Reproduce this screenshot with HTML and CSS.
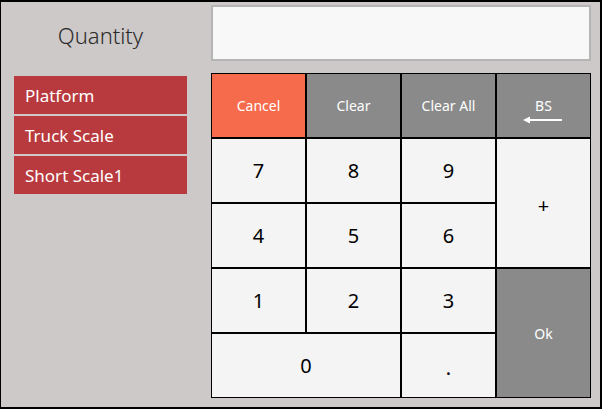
FILE: index.html
```html
<!DOCTYPE html>
<html>
<head>
<meta charset="utf-8">
<link rel="stylesheet" href="styles.css">
</head>
<body>
<div class="app">
  <div class="label">Quantity</div>
  <div class="input"></div>
  <div class="list">
    <div class="item">Platform</div>
    <div class="item">Truck Scale</div>
    <div class="item">Short Scale1</div>
  </div>
  <div class="pad">
    <div class="key cancel">Cancel</div>
    <div class="key grey">Clear</div>
    <div class="key grey">Clear All</div>
    <div class="key grey bs"><span>BS</span><svg width="40" height="8" viewBox="0 0 40 8"><rect x="4" y="3" width="35" height="2" fill="#fff"/><polygon points="0,4 7,0.5 7,7.5" fill="#fff"/></svg></div>
    <div class="key num">7</div>
    <div class="key num">8</div>
    <div class="key num">9</div>
    <div class="key num plus">+</div>
    <div class="key num">4</div>
    <div class="key num">5</div>
    <div class="key num">6</div>
    <div class="key num">1</div>
    <div class="key num">2</div>
    <div class="key num">3</div>
    <div class="key grey ok">Ok</div>
    <div class="key num zero">0</div>
    <div class="key num dot">.</div>
  </div>
</div>
</body>
</html>
```
FILE: styles.css
```css
html, body {
  margin: 0;
  padding: 0;
}
body {
  font-family: "Noto Sans", "Open Sans", sans-serif;
}
.app {
  width: 602px;
  height: 409px;
  box-sizing: border-box;
  border: 2px solid #000;
  border-left-width: 1px;
  background: #cdc9c8;
  padding: 4px 0 0 13px;
  display: grid;
  grid-template-columns: 173px 380px;
  grid-template-rows: 55px 325px;
  column-gap: 24px;
  row-gap: 12px;
}
.label {
  display: flex;
  align-items: center;
  justify-content: center;
  font-size: 22px;
  font-weight: 300;
  color: #2b2b2b;
  padding-top: 2px;
}
.input {
  box-sizing: border-box;
  background: #f8f8f8;
  border: 2px solid #b5b5b5;
  margin-top: -1px;
}
.list {
  display: flex;
  flex-direction: column;
  gap: 2px;
  padding-top: 3px;
}
.item {
  height: 38px;
  background: #b83a3e;
  color: #fff;
  font-size: 17px;
  display: flex;
  align-items: center;
  padding-left: 11px;
}
.pad {
  display: grid;
  grid-template-columns: repeat(4, 95px);
  grid-template-rows: repeat(5, 65px);
}
.key {
  box-sizing: border-box;
  border: 1px solid #000;
  display: flex;
  align-items: center;
  justify-content: center;
  font-size: 14px;
  color: #fff;
}
.cancel { background: #f76b4d; }
.grey { background: #8a8a8a; }
.bs {
  flex-direction: column;
  gap: 1px;
  padding-top: 8px;
}
.bs svg { display: block; margin-left: -2px; }
.num {
  background: #f4f4f4;
  color: #000;
  font-size: 20px;
}
.plus { grid-column: 4; grid-row: 2 / span 2; padding-top: 4px; }
.ok { grid-column: 4; grid-row: 4 / span 2; }
.zero { grid-column: 1 / span 2; }
.dot { padding-top: 4px; }
```
